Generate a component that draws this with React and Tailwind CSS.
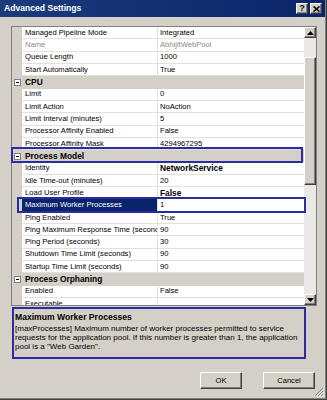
import React from 'react';

// property rows shown in the grid (top part is scrolled)
const rows = [
  { name: 'Managed Pipeline Mode', value: 'Integrated' },
  { name: 'Name', value: 'AbhijitWebPool', disabled: true },
  { name: 'Queue Length', value: '1000' },
  { name: 'Start Automatically', value: 'True' },
  { category: 'CPU' },
  { name: 'Limit', value: '0' },
  { name: 'Limit Action', value: 'NoAction' },
  { name: 'Limit Interval (minutes)', value: '5' },
  { name: 'Processor Affinity Enabled', value: 'False' },
  { name: 'Processor Affinity Mask', value: '4294967295' },
  { category: 'Process Model' },
  { name: 'Identity', value: 'NetworkService', bold: true },
  { name: 'Idle Time-out (minutes)', value: '20' },
  { name: 'Load User Profile', value: 'False', bold: true },
  { name: 'Maximum Worker Processes', value: '1', selected: true },
  { name: 'Ping Enabled', value: 'True' },
  { name: 'Ping Maximum Response Time (seconds)', value: '90' },
  { name: 'Ping Period (seconds)', value: '30' },
  { name: 'Shutdown Time Limit (seconds)', value: '90' },
  { name: 'Startup Time Limit (seconds)', value: '90' },
  { category: 'Process Orphaning' },
  { name: 'Enabled', value: 'False' },
  { name: 'Executable', value: '' },
];

const bevel =
  'bg-[#d4d0c8] border border-t-white border-l-white border-r-[#404040] border-b-[#404040] shadow-[inset_-1px_-1px_#808080]';

const Arrow = ({ down }) => (
  <svg width="7" height="4" viewBox="0 0 7 4">
    <path d={down ? 'M0 0H7L3.5 4Z' : 'M0 4H7L3.5 0Z'} fill="#000" />
  </svg>
);

const Collapse = () => (
  <div className="w-[7px] h-[7px] border border-[#808080] bg-white flex items-center justify-center">
    <div className="w-[3px] h-px bg-black" />
  </div>
);

const Row = ({ row }) => {
  if (row.category) {
    return (
      <div className="h-[12.32px] flex items-center bg-[#d4d0c8] shrink-0">
        <div className="w-[10px] flex justify-center">
          <Collapse />
        </div>
        <span className="pl-[3px] font-bold text-[8.4px] leading-none">{row.category}</span>
      </div>
    );
  }
  return (
    <div className="h-[12.32px] flex shrink-0">
      <div className="w-[10px] bg-[#d4d0c8]" />
      <div
        className={`w-[136px] flex items-center pl-[3px] border-b border-r border-[#e2e0da] overflow-hidden whitespace-nowrap leading-none ${
          row.selected ? 'bg-[#0a246a] text-white' : row.disabled ? 'text-[#8a8a8a]' : 'text-black'
        }`}
      >
        {row.name}
      </div>
      <div
        className={`flex-1 flex items-center pl-[2px] border-b border-[#e2e0da] whitespace-nowrap leading-none ${
          row.bold ? 'font-bold text-[8.4px]' : ''
        } ${row.disabled ? 'text-[#8a8a8a]' : 'text-black'}`}
      >
        {row.value}
      </div>
    </div>
  );
};

export default function App() {
  return (
    <div className="w-[327px] h-[400px] border-r border-b border-[#404040] bg-[#d4d0c8] font-['Liberation_Sans',Arial,sans-serif] text-[7.6px] text-black overflow-hidden relative">
      <div className="h-full border-r border-b border-[#808080] flex flex-col">
        {/* Title bar */}
        <div className="h-[17px] shrink-0 flex items-center pl-[4px] pr-[3px] bg-gradient-to-r from-[#1b3b7b] to-[#0a246a]">
          <span className="flex-1 text-white font-bold text-[8.6px] leading-none">Advanced Settings</span>
          <div className="flex gap-[2px]">
            <div className={`w-[12px] h-[11px] ${bevel} flex items-center justify-center font-bold text-[8.5px] leading-none`}>
              ?
            </div>
            <div className={`w-[12px] h-[11px] ${bevel} flex items-center justify-center`}>
              <svg width="7" height="6" viewBox="0 0 7 6">
                <path d="M0.5 0.5L6.5 5.5M6.5 0.5L0.5 5.5" stroke="#000" strokeWidth="1.6" />
              </svg>
            </div>
          </div>
        </div>

        <div className="flex-1 flex flex-col pl-[11px] pr-[8px] pt-[9px]">
          {/* Property grid */}
          <div className="h-[280px] shrink-0 border border-[#808080] bg-white flex">
            <div className="flex-1 flex flex-col overflow-hidden">
              {rows.map((row, i) => (
                <Row key={i} row={row} />
              ))}
            </div>
            <div className="w-[12px] flex flex-col bg-[#ebe9e5]">
              <div className={`h-[11px] shrink-0 ${bevel} flex items-center justify-center`}>
                <Arrow />
              </div>
              <div className="h-[19px] shrink-0" />
              <div className={`h-[128px] shrink-0 ${bevel}`} />
              <div className="flex-1" />
              <div className={`h-[11px] shrink-0 ${bevel} flex items-center justify-center`}>
                <Arrow down />
              </div>
            </div>
          </div>

          {/* Description panel */}
          <div className="mt-[1px] ml-[1px] w-[294px] h-[52px] border-2 border-[#2b2ba6] pl-[1px] pt-[3px] text-[8px] leading-[9.2px]">
            <div className="font-bold text-[8.6px] leading-[10px] mb-[1.5px]">Maximum Worker Processes</div>
            <div>
              [maxProcesses] Maximum number of worker processes permitted to service requests for the application
              pool. If this number is greater than 1, the application pool is a "Web Garden".
            </div>
          </div>

          {/* Buttons */}
          <div className="mt-[13px] mr-[2px] flex justify-end gap-[21px]">
            <button className={`w-[42px] h-[17px] ${bevel} text-[7.6px] leading-none`}>OK</button>
            <button className={`w-[52px] h-[17px] ${bevel} text-[7.6px] leading-none`}>Cancel</button>
          </div>
        </div>
      </div>

      {/* annotation highlights */}
      <div className="absolute left-[11px] top-[147px] w-[292px] h-[16px] border-2 border-[#2b2ba6] pointer-events-none" />
      <div className="absolute left-[17px] top-[197px] w-[289px] h-[16px] border-2 border-[#2b2ba6] pointer-events-none" />

      {/* size grip */}
      <svg className="absolute right-[2px] bottom-[2px]" width="10" height="10" viewBox="0 0 10 10">
        <path d="M9 1L1 9M9 4L4 9M9 7L7 9" stroke="#808080" strokeWidth="1" />
        <path d="M10 2L2 10M10 5L5 10M10 8L8 10" stroke="#ffffff" strokeWidth="1" />
      </svg>
    </div>
  );
}
